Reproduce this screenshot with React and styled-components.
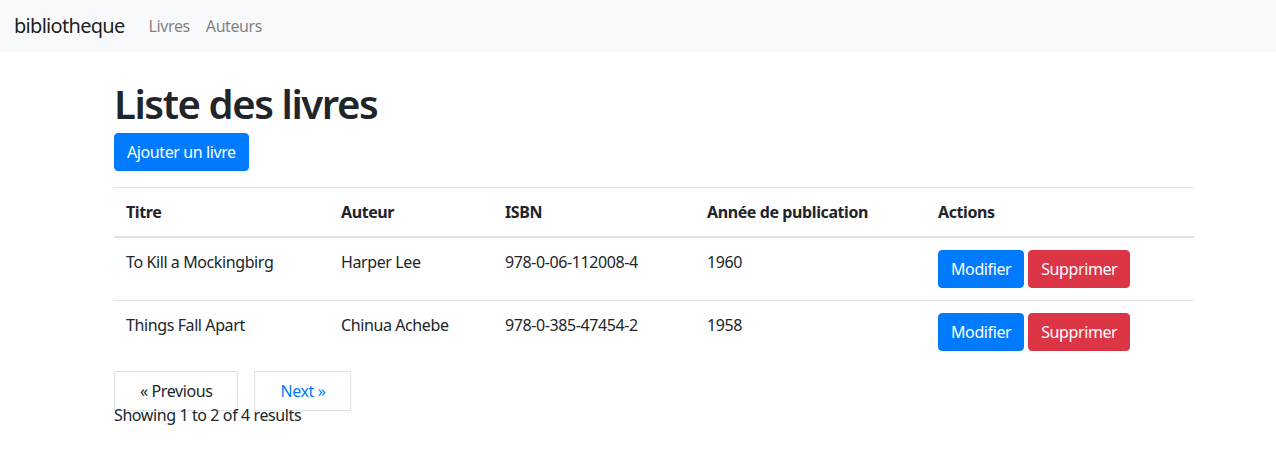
import React from "react";
import styled, { createGlobalStyle } from "styled-components";

const GlobalStyle = createGlobalStyle`
  body {
    margin: 0;
    font-family: "Noto Sans", "Open Sans", sans-serif;
    font-size: 16px;
    line-height: 24px;
    letter-spacing: -0.025em;
    color: #212529;
    background: #fff;
  }
  * { box-sizing: border-box; }
`;

const Navbar = styled.nav`
  height: 52px;
  background-color: #f8f9fa;
  display: flex;
  align-items: center;
  padding: 0 16px 0 14px;
`;

const Brand = styled.a`
  font-size: 20px;
  letter-spacing: -0.035em;
  color: rgba(0, 0, 0, 0.9);
  margin-right: 16px;
  text-decoration: none;
`;

const NavLink = styled.a`
  padding: 0 8px;
  color: rgba(0, 0, 0, 0.5);
  font-size: 16px;
  text-decoration: none;
`;

const Container = styled.main`
  width: 1080px;
  margin: 0 82px 0 114px;
`;

const Title = styled.h1`
  font-size: 40px;
  line-height: 48px;
  font-weight: 600;
  letter-spacing: -0.035em;
  margin: 28px 0 5px;
`;

const Button = styled.button`
  font-family: inherit;
  font-size: 16px;
  line-height: 24px;
  letter-spacing: inherit;
  height: 38px;
  padding: 6px 12px;
  border: 1px solid ${({ $variant }) => ($variant === "danger" ? "#dc3545" : "#007bff")};
  background-color: ${({ $variant }) => ($variant === "danger" ? "#dc3545" : "#007bff")};
  color: #fff;
  border-radius: 4px;
  cursor: pointer;
`;

const Table = styled.table`
  width: 100%;
  border-collapse: collapse;
  margin-top: 16px;
  margin-bottom: 16px;
`;

const Th = styled.th`
  text-align: left;
  font-weight: 700;
  padding: 12px;
  border-top: 1px solid #dee2e6;
  border-bottom: 2px solid #dee2e6;
  width: ${({ $w }) => $w}px;
`;

const Td = styled.td`
  padding: 12px;
  vertical-align: top;
  border-top: 1px solid #dee2e6;
`;

const Actions = styled.div`
  display: flex;
  gap: 4px;
`;

const Pager = styled.div`
  line-height: 24px;
`;

const PageLink = styled.a`
  display: inline;
  padding: 8px 25px;
  border: 1px solid #dee2e6;
  margin-right: 16px;
  color: ${({ $active }) => ($active ? "#007bff" : "#212529")};
  text-decoration: none;
`;

const books = [
  { title: "To Kill a Mockingbirg", author: "Harper Lee", isbn: "978-0-06-112008-4", year: 1960 },
  { title: "Things Fall Apart", author: "Chinua Achebe", isbn: "978-0-385-47454-2", year: 1958 },
];

export default function App() {
  return (
    <>
      <GlobalStyle />
      <Navbar>
        <Brand href="#">bibliotheque</Brand>
        <NavLink href="#">Livres</NavLink>
        <NavLink href="#">Auteurs</NavLink>
      </Navbar>
      <Container>
        <Title>Liste des livres</Title>
        <Button>Ajouter un livre</Button>
        <Table>
          <thead>
            <tr>
              <Th $w={215}>Titre</Th>
              <Th $w={164}>Auteur</Th>
              <Th $w={202}>ISBN</Th>
              <Th $w={231}>Année de publication</Th>
              <Th $w={268}>Actions</Th>
            </tr>
          </thead>
          <tbody>
            {books.map((b, i) => (
              <tr key={i}>
                <Td>{b.title}</Td>
                <Td>{b.author}</Td>
                <Td>{b.isbn}</Td>
                <Td>{b.year}</Td>
                <Td>
                  <Actions>
                    <Button>Modifier</Button>
                    <Button $variant="danger">Supprimer</Button>
                  </Actions>
                </Td>
              </tr>
            ))}
          </tbody>
        </Table>
        <Pager>
          <PageLink href="#">« Previous</PageLink>
          <PageLink href="#" $active>Next »</PageLink>
        </Pager>
        <div>Showing 1 to 2 of 4 results</div>
      </Container>
    </>
  );
}
